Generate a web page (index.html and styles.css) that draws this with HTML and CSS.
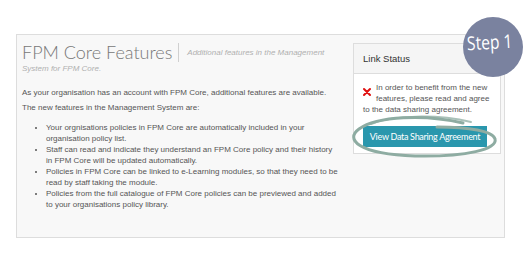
FILE: index.html
```html
<!DOCTYPE html>
<html>
<head>
<meta charset="utf-8">
<link rel="stylesheet" href="styles.css">
</head>
<body>
<div class="page">
  <div class="box">
    <div class="main">
      <h1 class="title"><span class="title-main">FPM Core Features</span><span class="divider"></span><small class="subtitle">Additional features in the Management System for FPM Core.</small></h1>
      <p class="para first">As your organisation has an account with FPM Core, additional features are available.</p>
      <p class="para">The new features in the Management System are:</p>
      <ul class="features">
        <li>Your orgnisations policies in FPM Core are automatically included in your organisation policy list.</li>
        <li>Staff can read and indicate they understand an FPM Core policy and their history in FPM Core will be updated automatically.</li>
        <li>Policies in FPM Core can be linked to e-Learning modules, so that they need to be read by staff taking the module.</li>
        <li>Policies from the full catalogue of FPM Core policies can be previewed and added to your organisations policy library.</li>
      </ul>
    </div>
    <aside class="panel">
      <div class="panel-head">Link Status</div>
      <div class="panel-body">
        <p class="notice"><svg class="cross" viewBox="0 0 8 8" width="8" height="8"><path d="M1 1 L7 7 M7 1 L1 7" stroke="#e01010" stroke-width="2" stroke-linecap="round"/></svg>In order to benefit from the new features, please read and agree to the data sharing agreement.</p>
        <button class="btn">View Data Sharing Agreement</button>
      </div>
    </aside>
  </div>
  <svg class="scribble" viewBox="0 0 160 55" width="160" height="55">
    <path d="M118 13 C 80 4, 32 6, 14 19 C 0 29, 12 44, 70 46 C 122 47, 153 39, 150 29 C 148 21, 124 17, 92 17" fill="none" stroke="#8eaca2" stroke-width="3" stroke-linecap="round"/>
    <path d="M26 14 C 48 5, 92 4, 126 12" fill="none" stroke="#8eaca2" stroke-width="2" stroke-linecap="round" opacity="0.75"/>
  </svg>
  <div class="step"><span class="step-text">Step 1</span></div>
</div>
</body>
</html>
```
FILE: styles.css
```css
html, body {
  margin: 0;
  padding: 0;
  background: #ffffff;
}
body {
  font-family: "Liberation Sans", Arial, sans-serif;
  color: #555555;
}
.page {
  position: relative;
  width: 523px;
  height: 260px;
  padding: 34px 0 0 16px;
  box-sizing: border-box;
}
.box {
  width: 489px;
  height: 204px;
  box-sizing: border-box;
  border: 1px solid #dddddd;
  background: #f8f8f8;
  display: flex;
  gap: 14px;
  padding: 8px 3px 0 5px;
}
.main {
  width: 317px;
  flex: none;
}
.title {
  margin: 0;
  font-weight: normal;
  font-size: 8px;
  line-height: 12px;
}
.title-main {
  font-family: Lato, sans-serif;
  font-weight: 300;
  font-size: 18px;
  color: #777777;
  line-height: 18px;
}
.divider {
  display: inline-block;
  width: 1px;
  height: 19px;
  background: #d0d0d0;
  margin: 0 8px 0 6px;
  vertical-align: -3px;
}
.subtitle {
  font-family: "Liberation Sans", Arial, sans-serif;
  font-style: italic;
  font-size: 8px;
  color: #b0b0b0;
  vertical-align: 4px;
}
.para {
  font-size: 8px;
  line-height: 11px;
  margin: 4px 0 0 0;
}
.para.first {
  margin-top: 8px;
}
.features {
  margin: 9px 0 0 0;
  padding-left: 24px;
  font-size: 8px;
  line-height: 11px;
  list-style: disc;
}
.panel {
  width: 148px;
  height: 111px;
  box-sizing: border-box;
  border: 1px solid #dddddd;
  background: #ffffff;
  flex: none;
}
.panel-head {
  height: 30px;
  box-sizing: border-box;
  border-bottom: 1px solid #dddddd;
  background: #f5f5f5;
  padding: 0 9px;
  line-height: 29px;
  font-size: 9.5px;
  color: #333333;
}
.panel-body {
  padding: 8px 9px 0;
}
.notice {
  margin: 0;
  font-size: 8px;
  line-height: 11px;
  color: #555555;
}
.cross {
  float: left;
  margin: 1px 5px 0 0;
  width: 8px;
  height: 18px;
}
.btn {
  display: block;
  margin-top: 11px;
  width: 124px;
  height: 21px;
  border: none;
  background: #2a97ad;
  color: #ffffff;
  font-family: Lato, sans-serif;
  font-size: 9px;
  letter-spacing: -0.3px;
  padding: 0;
}
.scribble {
  position: absolute;
  left: 345px;
  top: 110px;
}
.step {
  position: absolute;
  left: 463px;
  top: 17px;
  width: 60px;
  height: 60px;
  border-radius: 50%;
  background: #7a829f;
  color: #ffffff;
  display: flex;
  align-items: center;
  justify-content: center;
}
.step-text {
  font-family: "Open Sans", sans-serif;
  font-size: 19px;
  line-height: 1;
  white-space: nowrap;
  transform: translate(-3px, -5px) rotate(-3deg) scaleX(0.82);
}
```
